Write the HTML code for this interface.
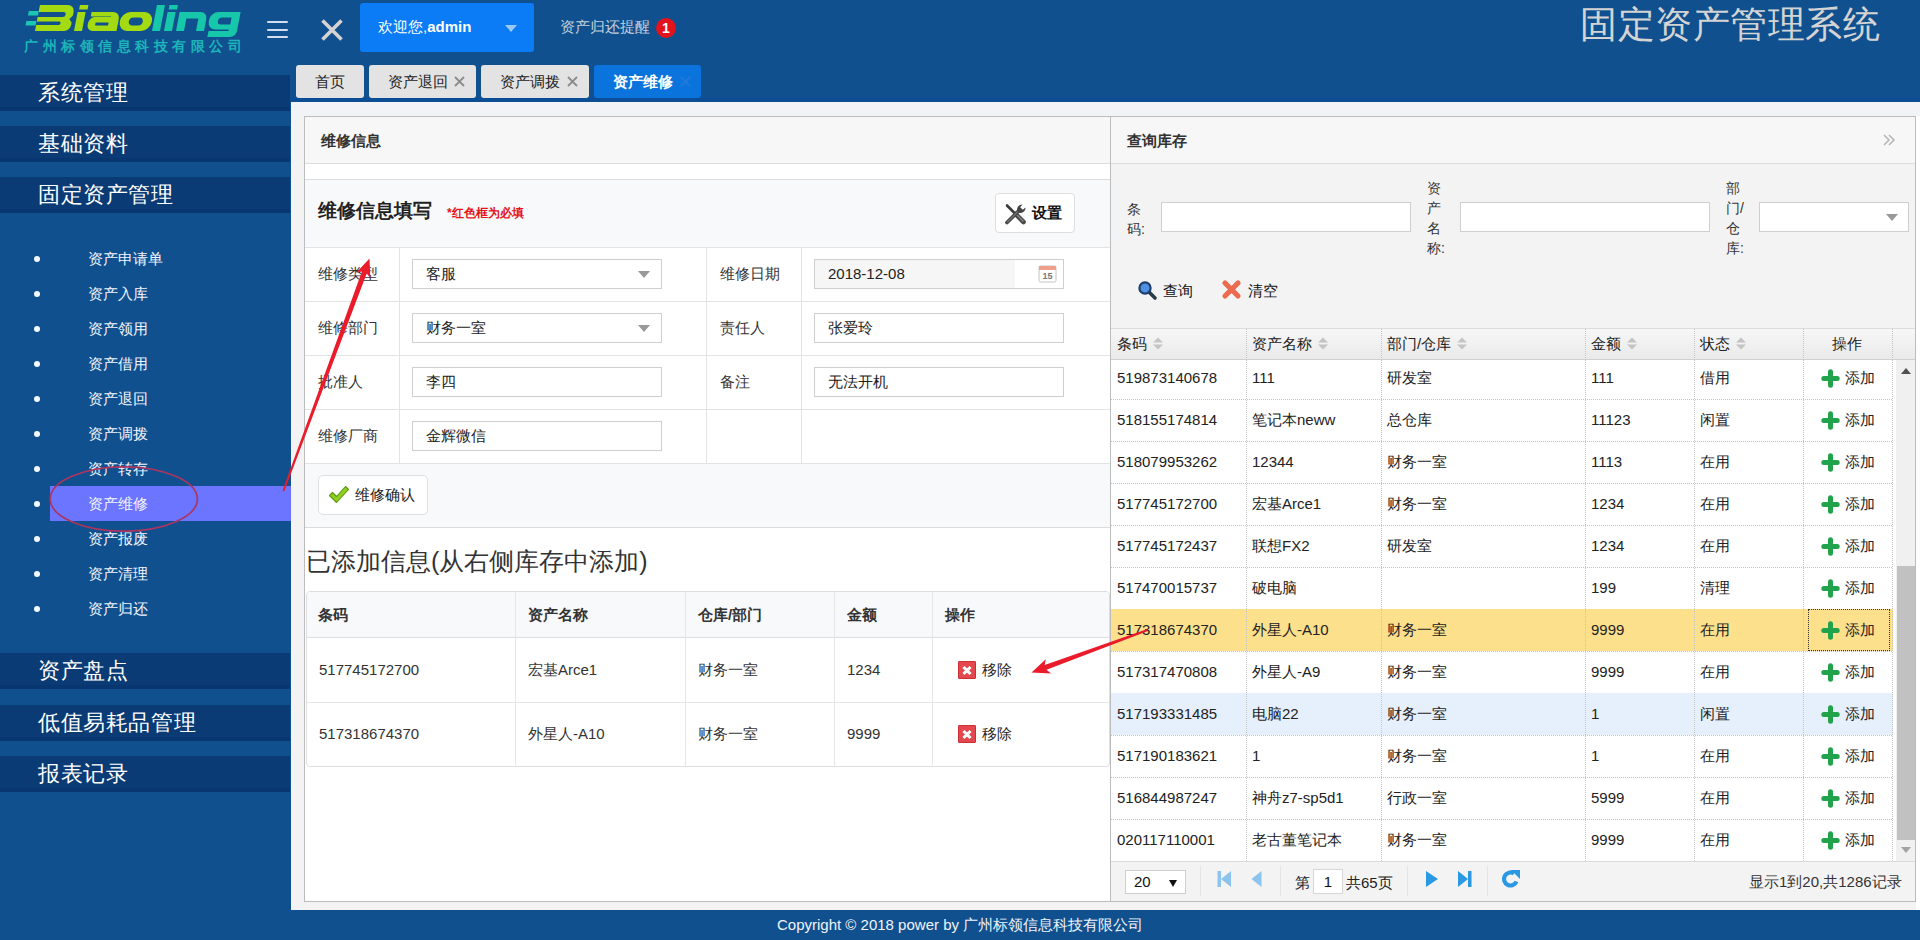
<!DOCTYPE html>
<html><head><meta charset="utf-8">
<style>
*{box-sizing:border-box;margin:0;padding:0}
html,body{width:1920px;height:940px;overflow:hidden}
body{position:relative;background:#11508f;font-family:"Liberation Sans",sans-serif;color:#333;font-size:15px}
.a{position:absolute}
.nw{white-space:nowrap}
/* header */
.logo1{left:26px;top:-4px;font-size:40px;font-weight:bold;font-style:italic;letter-spacing:-1px;line-height:44px}
.hamb{left:267px;width:21px;height:2px;background:#d2def0;border-radius:1px}
.welcome{left:360px;top:3px;width:174px;height:49px;background:#0b7cf6;border-radius:3px}
.tab{top:65px;height:33px;border-radius:3px;background:#e3e3e3;color:#222;font-size:15px;line-height:33px}
.tabx{color:#8a8a8a;font-size:17px}
.tx{position:absolute;top:11px;width:11px;height:11px}
/* sidebar */
.bar{left:0;width:290px;height:36px;background:#0a3b75;box-shadow:inset 0 -4px 0 #083670;color:#fff;font-size:22px;letter-spacing:0.6px;line-height:36px;padding-left:38px}
.sub{left:0;width:291px;height:35px;color:#f2f6ff;font-size:15px;line-height:35px}
.sub .dot{position:absolute;left:34px;top:15px;width:6px;height:6px;border-radius:50%;background:#f4f8ff}
.sub span{position:absolute;left:87.5px;top:0}
/* content */
.content{left:291px;top:102px;width:1629px;height:808px;background:#f3f3f4}
.panel{top:116px;height:786px;border:1px solid #bcbcbc;background:#fff}
.phead{position:absolute;left:0;top:0;right:0;height:47px;background:#f7f7f7;border-bottom:1px solid #dcdcdc;font-weight:bold;font-size:15px;line-height:47px;padding-left:16px;color:#333}
.lbl{font-size:15px;color:#333}
.inp{height:30px;border:1px solid #cfcfcf;background:#fff;font-size:15px;line-height:28px;padding-left:13px;color:#222}
.gl{background:#e3e3e3}
.rm{width:18px;height:18px;background:#e5474f;border:1px solid #c83038;border-radius:1px}
.rm:before,.rm:after{content:"";position:absolute;left:3px;top:7px;width:10px;height:3px;background:#fff;transform:rotate(45deg)}
.rm:after{transform:rotate(-45deg)}
.sl{font-size:14px;line-height:20px;color:#333}
.gh{top:334px;font-size:15px;line-height:20px;color:#222}
.srt{display:inline-block;margin-left:6px;vertical-align:-1px}
.gc{font-size:15px;line-height:20px;color:#222}
.dh{height:1px;background:repeating-linear-gradient(90deg,#c4c4c4 0 1px,transparent 1px 2px)}
.dv{width:1px;background:repeating-linear-gradient(180deg,#c4c4c4 0 1px,transparent 1px 2px)}
.plus{width:18px;height:18px;background:linear-gradient(#22a54a,#22a54a) 6px 0/6px 18px no-repeat,linear-gradient(#22a54a,#22a54a) 0 6px/18px 6px no-repeat;border-radius:2px}
.psep{top:866px;width:1px;height:30px;background:#e4e4e4}
.footer{left:777px;top:910px;height:30px;color:#f0f4fa;font-size:15px;line-height:30px}
</style></head><body>

<!-- HEADER -->
<svg class="a" style="left:0;top:0" width="260" height="40" viewBox="0 0 260 40">
 <g transform="translate(0,31) skewX(-10.8)">
  <path fill="#a3da12" fill-rule="evenodd" d="M35 -26H63A7 7 0 0 1 70 -19V-15.5L67 -12L70 -8.5V-6A6 6 0 0 1 64 0H35V-6H58A2 2 0 0 0 58 -9.5H35V-14H60A2.5 2.5 0 0 0 60 -19H35Z"/>
  <path fill="#1bc5b0" d="M25 -20H35V-15.5H25Z M24.5 -10H34.5V-5.5H24.5Z"/>
  <path fill="#a3da12" d="M74 -19H82V0H74Z M75 -26H83.5V-21.5H75Z"/>
  <path fill="#a3da12" fill-rule="evenodd" d="M88 -19H109A7 7 0 0 1 116.5 -12V0H92A6 6 0 0 1 86.5 -6V-8A6 6 0 0 1 92 -14H108.5V-14.5H88Z M94 -8.5V-5.5H107V-8.5Z"/>
  <path fill="#a3da12" fill-rule="evenodd" d="M127 -19H141A9 9 0 0 1 150 -10V-9A9 9 0 0 1 141 0H127A9 9 0 0 1 118 -9V-10A9 9 0 0 1 127 -19Z M131 -13.5A4 4 0 0 0 127 -9.5A4 4 0 0 0 131 -5.5H137A4 4 0 0 0 141 -9.5A4 4 0 0 0 137 -13.5Z"/>
  <path fill="#16c7aa" d="M152 -26H160V0H152Z M164 -19H172V0H164Z M164.5 -26H173V-21.5H164.5Z"/>
  <path fill="#16c7aa" d="M176 -19H197A7 7 0 0 1 204 -12V0H196V-12.5H184V0H176Z"/>
  <path fill="#16c7aa" fill-rule="evenodd" d="M215 -19H237V0A6 6 0 0 1 231 6H208.5V0H228.5V-1.5H215A8 8 0 0 1 207 -9.5V-11A8 8 0 0 1 215 -19Z M219.5 -13.5A3.5 3.5 0 0 0 216 -10A3.5 3.5 0 0 0 219.5 -6.5H229V-13.5Z"/>
 </g>
</svg>
<div class="a nw" style="left:24px;top:37px;font-size:14px;line-height:18px;letter-spacing:4.5px;color:#1cb4b8;font-weight:bold">广州标领信息科技有限公司</div>
<div class="a hamb" style="top:21px"></div>
<div class="a hamb" style="top:29px"></div>
<div class="a hamb" style="top:36px"></div>
<svg class="a" style="left:319px;top:17px" width="26" height="26" viewBox="0 0 26 26"><path d="M3.5 3.5L22.5 22.5M22.5 3.5L3.5 22.5" stroke="#d6d4d2" stroke-width="3.6"/></svg>
<div class="a welcome"><span class="a nw" style="left:18px;top:14px;color:#fff;font-size:15px;line-height:20px">欢迎您,<b>admin</b></span>
<svg class="a" style="left:145px;top:22px" width="12" height="7"><path d="M0 0H12L6 7Z" fill="#9ccaff"/></svg></div>
<div class="a nw" style="left:560px;top:17px;color:#c5d0de;font-size:15px;line-height:20px">资产归还提醒</div>
<div class="a" style="left:656px;top:18px;width:20px;height:20px;border-radius:50%;background:#e3131b;color:#fff;font-size:14px;font-weight:bold;text-align:center;line-height:20px">1</div>
<div class="a nw" style="left:1580px;top:3px;color:#d4d4d4;font-size:37px;letter-spacing:0.5px;line-height:44px">固定资产管理系统</div>

<div class="a tab" style="left:296px;width:68px;text-align:center">首页</div>
<div class="a tab" style="left:369px;width:107px"><span class="a" style="left:19px">资产退回</span><svg class="tx" style="left:85px" viewBox="0 0 11 11"><path d="M1 1L10 10M10 1L1 10" stroke="#8c8c8c" stroke-width="1.9"/></svg></div>
<div class="a tab" style="left:481px;width:108px"><span class="a" style="left:19px">资产调拨</span><svg class="tx" style="left:86px" viewBox="0 0 11 11"><path d="M1 1L10 10M10 1L1 10" stroke="#8c8c8c" stroke-width="1.9"/></svg></div>
<div class="a tab" style="left:594px;width:107px;background:#0a74dc;color:#fff;font-weight:bold"><span class="a" style="left:19px">资产维修</span><svg class="tx" style="left:86px" viewBox="0 0 11 11"><path d="M1 1L10 10M10 1L1 10" stroke="#2079d8" stroke-width="1.9"/></svg></div>

<div class="a" style="left:291px;top:98px;width:1629px;height:3px;background:#0b4e97"></div>
<!-- SIDEBAR -->
<div class="a bar" style="top:75px">系统管理</div>
<div class="a bar" style="top:126px">基础资料</div>
<div class="a bar" style="top:177px">固定资产管理</div>

<div class="a sub" style="top:241px"><i class="dot"></i><span>资产申请单</span></div>
<div class="a sub" style="top:276px"><i class="dot"></i><span>资产入库</span></div>
<div class="a sub" style="top:311px"><i class="dot"></i><span>资产领用</span></div>
<div class="a sub" style="top:346px"><i class="dot"></i><span>资产借用</span></div>
<div class="a sub" style="top:381px"><i class="dot"></i><span>资产退回</span></div>
<div class="a sub" style="top:416px"><i class="dot"></i><span>资产调拨</span></div>
<div class="a sub" style="top:451px"><i class="dot"></i><span>资产转存</span></div>
<div class="a" style="left:50px;top:486px;width:241px;height:35px;background:#6b75ff"></div>
<div class="a sub" style="top:486px"><i class="dot"></i><span>资产维修</span></div>
<div class="a sub" style="top:521px"><i class="dot"></i><span>资产报废</span></div>
<div class="a sub" style="top:556px"><i class="dot"></i><span>资产清理</span></div>
<div class="a sub" style="top:591px"><i class="dot"></i><span>资产归还</span></div>

<div class="a bar" style="top:653px">资产盘点</div>
<div class="a bar" style="top:705px">低值易耗品管理</div>
<div class="a bar" style="top:756px">报表记录</div>

<!-- CONTENT -->
<div class="a content"></div>
<div class="a" style="left:291px;top:102px;width:1629px;height:14px;background:#f1f3f7"></div>

<div class="a" style="left:1916px;top:116px;width:4px;height:794px;background:#fff"></div>
<!-- LEFT PANEL -->
<div class="a panel" style="left:304px;width:807px">
  <div class="phead">维修信息</div>
</div>

<!-- form box -->
<div class="a" style="left:305px;top:179px;width:805px;height:349px;border-top:1px solid #dcdcdc;border-bottom:1px solid #dcdcdc;background:#f8f9fb"></div>
<div class="a nw" style="left:318px;top:199px;font-size:19px;font-weight:bold;line-height:24px;color:#222">维修信息填写</div>
<div class="a nw" style="left:447px;top:205px;font-size:12px;font-weight:bold;line-height:16px;color:#e3141c">*红色框为必填</div>
<div class="a" style="left:995px;top:193px;width:80px;height:40px;border:1px solid #dedede;border-radius:4px;background:#fff"></div>
<svg class="a" style="left:1004px;top:203px" width="23" height="22" viewBox="0 0 23 22">
 <path d="M3 2.5L11 10.5" stroke="#3a3a3a" stroke-width="2.6" stroke-linecap="round"/>
 <path d="M11.5 11L19.5 19" stroke="#4a4a4a" stroke-width="4.6" stroke-linecap="round"/>
 <path d="M12 11L19 18" stroke="#8a8a8a" stroke-width="1.2" stroke-linecap="round"/>
 <path d="M3 19.5L15 7.5" stroke="#4a4a4a" stroke-width="3.8" stroke-linecap="round"/>
 <path d="M3.5 19L14.5 8" stroke="#8a8a8a" stroke-width="1" stroke-linecap="round"/>
 <path d="M13.5 8.5A5 5 0 0 1 18.5 1.5L16.2 4.2L18.8 6.8L21.5 4.5A5 5 0 0 1 14.5 9.5Z" fill="#444"/>
</svg>
<div class="a nw" style="left:1032px;top:203px;font-size:15px;font-weight:bold;line-height:20px;color:#111">设置</div>

<div class="a" style="left:305px;top:247px;width:805px;height:216px;background:#fff"></div>
<div class="a gl" style="left:305px;top:247px;width:805px;height:1px"></div>
<div class="a gl" style="left:305px;top:301px;width:805px;height:1px"></div>
<div class="a gl" style="left:305px;top:355px;width:805px;height:1px"></div>
<div class="a gl" style="left:305px;top:409px;width:805px;height:1px"></div>
<div class="a gl" style="left:305px;top:463px;width:805px;height:1px"></div>
<div class="a gl" style="left:399px;top:247px;width:1px;height:216px"></div>
<div class="a gl" style="left:706px;top:247px;width:1px;height:216px"></div>
<div class="a gl" style="left:801px;top:247px;width:1px;height:216px"></div>

<div class="a lbl nw" style="left:318px;top:264px;line-height:20px">维修类型</div>
<div class="a lbl nw" style="left:318px;top:318px;line-height:20px">维修部门</div>
<div class="a lbl nw" style="left:318px;top:372px;line-height:20px">批准人</div>
<div class="a lbl nw" style="left:318px;top:426px;line-height:20px">维修厂商</div>
<div class="a lbl nw" style="left:720px;top:264px;line-height:20px">维修日期</div>
<div class="a lbl nw" style="left:720px;top:318px;line-height:20px">责任人</div>
<div class="a lbl nw" style="left:720px;top:372px;line-height:20px">备注</div>

<div class="a inp nw" style="left:412px;top:259px;width:250px">客服</div>
<svg class="a" style="left:638px;top:271px" width="12" height="7"><path d="M0 0H12L6 7Z" fill="#999"/></svg>
<div class="a inp nw" style="left:412px;top:313px;width:250px">财务一室</div>
<svg class="a" style="left:638px;top:325px" width="12" height="7"><path d="M0 0H12L6 7Z" fill="#999"/></svg>
<div class="a inp nw" style="left:412px;top:367px;width:250px">李四</div>
<div class="a inp nw" style="left:412px;top:421px;width:250px">金辉微信</div>
<div class="a inp nw" style="left:814px;top:259px;width:250px;background:linear-gradient(90deg,#f6f6f6 0,#f6f6f6 200px,#fff 200px)">2018-12-08</div>
<svg class="a" style="left:1038px;top:264px" width="19" height="19" viewBox="0 0 19 19">
 <rect x="1" y="2" width="17" height="16" rx="1.5" fill="#fff" stroke="#c4c4c4"/>
 <rect x="1" y="2" width="17" height="4" fill="#f0a08a"/>
 <text x="9.5" y="15" font-size="9" font-family="Liberation Sans" text-anchor="middle" fill="#777" font-weight="bold">15</text>
</svg>
<div class="a inp nw" style="left:814px;top:313px;width:250px">张爱玲</div>
<div class="a inp nw" style="left:814px;top:367px;width:250px">无法开机</div>

<div class="a" style="left:318px;top:475px;width:110px;height:40px;border:1px solid #e0e0e0;border-radius:5px;background:#fff"></div>
<svg class="a" style="left:328px;top:485px" width="22" height="19" viewBox="0 0 22 19">
 <path d="M1.5 10.5L4.5 7.5L8.5 11.5L17.5 1.5L20.5 4.5L8.5 17.5Z" fill="#8fd01c" stroke="#5f9410" stroke-width="1.1" stroke-linejoin="round"/>
</svg>
<div class="a lbl nw" style="left:355px;top:485px;line-height:20px;color:#222">维修确认</div>

<div class="a nw" style="left:306px;top:546px;font-size:25px;line-height:30px;color:#333">已添加信息(从右侧库存中添加)</div>

<!-- added table -->
<div class="a" style="left:306px;top:591px;width:804px;height:176px;border:1px solid #dedede;border-radius:4px;background:#fff;overflow:hidden">
 <div class="a" style="left:0;top:0;width:802px;height:46px;background:#f8f9fb;border-bottom:1px solid #dedede"></div>
 <div class="a gl" style="left:0;top:110px;width:802px;height:1px;background:#e6e6e6"></div>
 <div class="a gl" style="left:208px;top:0;width:1px;height:176px;background:#e6e6e6"></div>
 <div class="a gl" style="left:378px;top:0;width:1px;height:176px;background:#e6e6e6"></div>
 <div class="a gl" style="left:527px;top:0;width:1px;height:176px;background:#e6e6e6"></div>
 <div class="a gl" style="left:625px;top:0;width:1px;height:176px;background:#e6e6e6"></div>
</div>
<div class="a nw" style="left:318px;top:605px;font-weight:bold;line-height:20px">条码</div>
<div class="a nw" style="left:528px;top:605px;font-weight:bold;line-height:20px">资产名称</div>
<div class="a nw" style="left:698px;top:605px;font-weight:bold;line-height:20px">仓库/部门</div>
<div class="a nw" style="left:847px;top:605px;font-weight:bold;line-height:20px">金额</div>
<div class="a nw" style="left:945px;top:605px;font-weight:bold;line-height:20px">操作</div>

<div class="a nw" style="left:319px;top:660px;line-height:20px">517745172700</div>
<div class="a nw" style="left:528px;top:660px;line-height:20px">宏基Arce1</div>
<div class="a nw" style="left:698px;top:660px;line-height:20px">财务一室</div>
<div class="a nw" style="left:847px;top:660px;line-height:20px">1234</div>
<div class="a rm" style="left:958px;top:661px"></div>
<div class="a nw" style="left:982px;top:660px;line-height:20px;color:#222">移除</div>

<div class="a nw" style="left:319px;top:724px;line-height:20px">517318674370</div>
<div class="a nw" style="left:528px;top:724px;line-height:20px">外星人-A10</div>
<div class="a nw" style="left:698px;top:724px;line-height:20px">财务一室</div>
<div class="a nw" style="left:847px;top:724px;line-height:20px">9999</div>
<div class="a rm" style="left:958px;top:725px"></div>
<div class="a nw" style="left:982px;top:724px;line-height:20px;color:#222">移除</div>

<!-- RIGHT PANEL -->
<div class="a panel" style="left:1110px;width:806px">
  <div class="phead">查询库存</div>
</div>

<!-- search area -->
<div class="a" style="left:1111px;top:164px;width:804px;height:164px;background:#f3f3f3"></div>
<div class="a sl" style="left:1127px;top:199px">条<br>码:</div>
<div class="a inp" style="left:1161px;top:202px;width:250px"></div>
<div class="a sl" style="left:1427px;top:178px">资<br>产<br>名<br>称:</div>
<div class="a inp" style="left:1460px;top:202px;width:250px"></div>
<div class="a sl" style="left:1726px;top:178px">部<br>门/<br>仓<br>库:</div>
<div class="a inp" style="left:1759px;top:202px;width:150px"></div>
<svg class="a" style="left:1886px;top:214px" width="12" height="7"><path d="M0 0H12L6 7Z" fill="#999"/></svg>

<svg class="a" style="left:1137px;top:280px" width="21" height="21" viewBox="0 0 21 21">
 <path d="M11 11L18 18" stroke="#2b3a48" stroke-width="3.6" stroke-linecap="round"/>
 <circle cx="8" cy="8" r="5.6" fill="#4f90e0" stroke="#1d3e6a" stroke-width="2.2"/>
</svg>
<div class="a nw" style="left:1163px;top:281px;font-size:15px;line-height:20px;color:#111">查询</div>
<svg class="a" style="left:1221px;top:279px" width="21" height="21" viewBox="0 0 21 21">
 <path d="M4 4L17 17M17 4L4 17" stroke="#ec6a50" stroke-width="5.2" stroke-linecap="round"/>
</svg>
<div class="a nw" style="left:1248px;top:281px;font-size:15px;line-height:20px;color:#111">清空</div>

<!-- grid header -->
<div class="a" style="left:1111px;top:328px;width:804px;height:32px;background:linear-gradient(#f7f7f7,#eaeaea);border-top:1px solid #dcdcdc;border-bottom:1px solid #d0d0d0"></div>
<div class="a dv" style="left:1246px;top:329px;height:30px"></div>
<div class="a dv" style="left:1381px;top:329px;height:30px"></div>
<div class="a dv" style="left:1585px;top:329px;height:30px"></div>
<div class="a dv" style="left:1694px;top:329px;height:30px"></div>
<div class="a dv" style="left:1803px;top:329px;height:30px"></div>
<div class="a dv" style="left:1892px;top:329px;height:30px"></div>
<div class="a nw gh" style="left:1117px">条码<svg class="srt" width="10" height="13"><path d="M0 5.5L5 0.5L10 5.5Z M0 7.5L5 12.5L10 7.5Z" fill="#c4c4c4"/></svg></div>
<div class="a nw gh" style="left:1252px">资产名称<svg class="srt" width="10" height="13"><path d="M0 5.5L5 0.5L10 5.5Z M0 7.5L5 12.5L10 7.5Z" fill="#c4c4c4"/></svg></div>
<div class="a nw gh" style="left:1387px">部门/仓库<svg class="srt" width="10" height="13"><path d="M0 5.5L5 0.5L10 5.5Z M0 7.5L5 12.5L10 7.5Z" fill="#c4c4c4"/></svg></div>
<div class="a nw gh" style="left:1591px">金额<svg class="srt" width="10" height="13"><path d="M0 5.5L5 0.5L10 5.5Z M0 7.5L5 12.5L10 7.5Z" fill="#c4c4c4"/></svg></div>
<div class="a nw gh" style="left:1700px">状态<svg class="srt" width="10" height="13"><path d="M0 5.5L5 0.5L10 5.5Z M0 7.5L5 12.5L10 7.5Z" fill="#c4c4c4"/></svg></div>
<div class="a nw gh" style="left:1832px">操作</div>

<div class="a" style="left:1111px;top:360px;width:782px;height:502px;overflow:hidden;background:#fff">
 <div class="a dh" style="left:0;top:39px;width:782px"></div>
 <div class="a dh" style="left:0;top:81px;width:782px"></div>
 <div class="a dh" style="left:0;top:123px;width:782px"></div>
 <div class="a dh" style="left:0;top:165px;width:782px"></div>
 <div class="a dh" style="left:0;top:207px;width:782px"></div>
 <div class="a dh" style="left:0;top:249px;width:782px"></div>
 <div class="a" style="left:0;top:249px;width:782px;height:42px;background:#fde08c"></div>
 <div class="a dh" style="left:0;top:291px;width:782px"></div>
 <div class="a dh" style="left:0;top:333px;width:782px"></div>
 <div class="a" style="left:0;top:333px;width:782px;height:42px;background:#e6effc"></div>
 <div class="a dh" style="left:0;top:375px;width:782px"></div>
 <div class="a dh" style="left:0;top:417px;width:782px"></div>
 <div class="a dh" style="left:0;top:459px;width:782px"></div>
 <div class="a dh" style="left:0;top:501px;width:782px"></div>
 <div class="a dv" style="left:135px;top:0;height:502px"></div>
 <div class="a dv" style="left:270px;top:0;height:502px"></div>
 <div class="a dv" style="left:474px;top:0;height:502px"></div>
 <div class="a dv" style="left:583px;top:0;height:502px"></div>
 <div class="a dv" style="left:692px;top:0;height:502px"></div>
 <div class="a dv" style="left:781px;top:0;height:502px"></div>
 <div class="a" style="left:697px;top:249px;width:82px;height:42px;border:1px dotted #333"></div>
 <div class="a nw gc" style="left:6px;top:8px">519873140678</div>
 <div class="a nw gc" style="left:141px;top:8px">111</div>
 <div class="a nw gc" style="left:276px;top:8px">研发室</div>
 <div class="a nw gc" style="left:480px;top:8px">111</div>
 <div class="a nw gc" style="left:589px;top:8px">借用</div>
 <svg class="a" style="left:710px;top:9px" width="19" height="19"><path d="M9.5 2.8V16.2M2.8 9.5H16.2" stroke="#21a34b" stroke-width="5" stroke-linecap="round"/></svg>
 <div class="a nw gc" style="left:734px;top:8px">添加</div>
 <div class="a nw gc" style="left:6px;top:50px">518155174814</div>
 <div class="a nw gc" style="left:141px;top:50px">笔记本neww</div>
 <div class="a nw gc" style="left:276px;top:50px">总仓库</div>
 <div class="a nw gc" style="left:480px;top:50px">11123</div>
 <div class="a nw gc" style="left:589px;top:50px">闲置</div>
 <svg class="a" style="left:710px;top:51px" width="19" height="19"><path d="M9.5 2.8V16.2M2.8 9.5H16.2" stroke="#21a34b" stroke-width="5" stroke-linecap="round"/></svg>
 <div class="a nw gc" style="left:734px;top:50px">添加</div>
 <div class="a nw gc" style="left:6px;top:92px">518079953262</div>
 <div class="a nw gc" style="left:141px;top:92px">12344</div>
 <div class="a nw gc" style="left:276px;top:92px">财务一室</div>
 <div class="a nw gc" style="left:480px;top:92px">1113</div>
 <div class="a nw gc" style="left:589px;top:92px">在用</div>
 <svg class="a" style="left:710px;top:93px" width="19" height="19"><path d="M9.5 2.8V16.2M2.8 9.5H16.2" stroke="#21a34b" stroke-width="5" stroke-linecap="round"/></svg>
 <div class="a nw gc" style="left:734px;top:92px">添加</div>
 <div class="a nw gc" style="left:6px;top:134px">517745172700</div>
 <div class="a nw gc" style="left:141px;top:134px">宏基Arce1</div>
 <div class="a nw gc" style="left:276px;top:134px">财务一室</div>
 <div class="a nw gc" style="left:480px;top:134px">1234</div>
 <div class="a nw gc" style="left:589px;top:134px">在用</div>
 <svg class="a" style="left:710px;top:135px" width="19" height="19"><path d="M9.5 2.8V16.2M2.8 9.5H16.2" stroke="#21a34b" stroke-width="5" stroke-linecap="round"/></svg>
 <div class="a nw gc" style="left:734px;top:134px">添加</div>
 <div class="a nw gc" style="left:6px;top:176px">517745172437</div>
 <div class="a nw gc" style="left:141px;top:176px">联想FX2</div>
 <div class="a nw gc" style="left:276px;top:176px">研发室</div>
 <div class="a nw gc" style="left:480px;top:176px">1234</div>
 <div class="a nw gc" style="left:589px;top:176px">在用</div>
 <svg class="a" style="left:710px;top:177px" width="19" height="19"><path d="M9.5 2.8V16.2M2.8 9.5H16.2" stroke="#21a34b" stroke-width="5" stroke-linecap="round"/></svg>
 <div class="a nw gc" style="left:734px;top:176px">添加</div>
 <div class="a nw gc" style="left:6px;top:218px">517470015737</div>
 <div class="a nw gc" style="left:141px;top:218px">破电脑</div>
 <div class="a nw gc" style="left:480px;top:218px">199</div>
 <div class="a nw gc" style="left:589px;top:218px">清理</div>
 <svg class="a" style="left:710px;top:219px" width="19" height="19"><path d="M9.5 2.8V16.2M2.8 9.5H16.2" stroke="#21a34b" stroke-width="5" stroke-linecap="round"/></svg>
 <div class="a nw gc" style="left:734px;top:218px">添加</div>
 <div class="a nw gc" style="left:6px;top:260px">517318674370</div>
 <div class="a nw gc" style="left:141px;top:260px">外星人-A10</div>
 <div class="a nw gc" style="left:276px;top:260px">财务一室</div>
 <div class="a nw gc" style="left:480px;top:260px">9999</div>
 <div class="a nw gc" style="left:589px;top:260px">在用</div>
 <svg class="a" style="left:710px;top:261px" width="19" height="19"><path d="M9.5 2.8V16.2M2.8 9.5H16.2" stroke="#21a34b" stroke-width="5" stroke-linecap="round"/></svg>
 <div class="a nw gc" style="left:734px;top:260px">添加</div>
 <div class="a nw gc" style="left:6px;top:302px">517317470808</div>
 <div class="a nw gc" style="left:141px;top:302px">外星人-A9</div>
 <div class="a nw gc" style="left:276px;top:302px">财务一室</div>
 <div class="a nw gc" style="left:480px;top:302px">9999</div>
 <div class="a nw gc" style="left:589px;top:302px">在用</div>
 <svg class="a" style="left:710px;top:303px" width="19" height="19"><path d="M9.5 2.8V16.2M2.8 9.5H16.2" stroke="#21a34b" stroke-width="5" stroke-linecap="round"/></svg>
 <div class="a nw gc" style="left:734px;top:302px">添加</div>
 <div class="a nw gc" style="left:6px;top:344px">517193331485</div>
 <div class="a nw gc" style="left:141px;top:344px">电脑22</div>
 <div class="a nw gc" style="left:276px;top:344px">财务一室</div>
 <div class="a nw gc" style="left:480px;top:344px">1</div>
 <div class="a nw gc" style="left:589px;top:344px">闲置</div>
 <svg class="a" style="left:710px;top:345px" width="19" height="19"><path d="M9.5 2.8V16.2M2.8 9.5H16.2" stroke="#21a34b" stroke-width="5" stroke-linecap="round"/></svg>
 <div class="a nw gc" style="left:734px;top:344px">添加</div>
 <div class="a nw gc" style="left:6px;top:386px">517190183621</div>
 <div class="a nw gc" style="left:141px;top:386px">1</div>
 <div class="a nw gc" style="left:276px;top:386px">财务一室</div>
 <div class="a nw gc" style="left:480px;top:386px">1</div>
 <div class="a nw gc" style="left:589px;top:386px">在用</div>
 <svg class="a" style="left:710px;top:387px" width="19" height="19"><path d="M9.5 2.8V16.2M2.8 9.5H16.2" stroke="#21a34b" stroke-width="5" stroke-linecap="round"/></svg>
 <div class="a nw gc" style="left:734px;top:386px">添加</div>
 <div class="a nw gc" style="left:6px;top:428px">516844987247</div>
 <div class="a nw gc" style="left:141px;top:428px">神舟z7-sp5d1</div>
 <div class="a nw gc" style="left:276px;top:428px">行政一室</div>
 <div class="a nw gc" style="left:480px;top:428px">5999</div>
 <div class="a nw gc" style="left:589px;top:428px">在用</div>
 <svg class="a" style="left:710px;top:429px" width="19" height="19"><path d="M9.5 2.8V16.2M2.8 9.5H16.2" stroke="#21a34b" stroke-width="5" stroke-linecap="round"/></svg>
 <div class="a nw gc" style="left:734px;top:428px">添加</div>
 <div class="a nw gc" style="left:6px;top:470px">020117110001</div>
 <div class="a nw gc" style="left:141px;top:470px">老古董笔记本</div>
 <div class="a nw gc" style="left:276px;top:470px">财务一室</div>
 <div class="a nw gc" style="left:480px;top:470px">9999</div>
 <div class="a nw gc" style="left:589px;top:470px">在用</div>
 <svg class="a" style="left:710px;top:471px" width="19" height="19"><path d="M9.5 2.8V16.2M2.8 9.5H16.2" stroke="#21a34b" stroke-width="5" stroke-linecap="round"/></svg>
 <div class="a nw gc" style="left:734px;top:470px">添加</div>
</div>

<!-- scrollbar -->
<div class="a" style="left:1893px;top:360px;width:22px;height:502px;background:#fff"></div>
<div class="a" style="left:1896px;top:360px;width:19px;height:502px;background:#f0f0f0"></div>
<div class="a" style="left:1897px;top:566px;width:18px;height:274px;background:#c1c1c1"></div>
<svg class="a" style="left:1901px;top:368px" width="10" height="6"><path d="M0 6H10L5 0Z" fill="#505050"/></svg>
<svg class="a" style="left:1901px;top:847px" width="10" height="6"><path d="M0 0H10L5 6Z" fill="#a3a3a3"/></svg>

<!-- pager -->
<div class="a" style="left:1111px;top:861px;width:804px;height:40px;background:#f3f3f3;border-top:1px solid #dadada"></div>
<div class="a" style="left:1125px;top:870px;width:61px;height:24px;border:1px solid #cfcfcf;background:#fff"></div>
<div class="a nw" style="left:1134px;top:872px;font-size:15px;line-height:20px;color:#111">20</div>
<svg class="a" style="left:1169px;top:880px" width="8" height="7"><path d="M0 0H8L4 7Z" fill="#111"/></svg>
<div class="a psep" style="left:1200px"></div>
<svg class="a" style="left:1217px;top:870px" width="15" height="18" viewBox="0 0 15 18"><rect x="0.5" y="1" width="3.5" height="16" fill="#8cc4ee"/><path d="M14 1V17L4 9Z" fill="#8cc4ee"/></svg>
<svg class="a" style="left:1251px;top:870px" width="11" height="18" viewBox="0 0 11 18"><path d="M10.5 1V17L0.5 9Z" fill="#8cc4ee"/></svg>
<div class="a psep" style="left:1280px"></div>
<div class="a nw" style="left:1295px;top:873px;font-size:15px;line-height:20px;color:#222">第</div>
<div class="a" style="left:1313px;top:869px;width:30px;height:25px;border:1px solid #d6d6d6;background:#fff;text-align:center;font-size:15px;line-height:23px;color:#111">1</div>
<div class="a nw" style="left:1346px;top:873px;font-size:15px;line-height:20px;color:#222">共65页</div>
<div class="a psep" style="left:1407px"></div>
<svg class="a" style="left:1425px;top:870px" width="14" height="18" viewBox="0 0 14 18"><path d="M1 1V17L13 9Z" fill="#2a98e2"/></svg>
<svg class="a" style="left:1457px;top:870px" width="15" height="18" viewBox="0 0 15 18"><path d="M1 1V17L11 9Z" fill="#2a98e2"/><rect x="11" y="1" width="3.5" height="16" fill="#2a98e2"/></svg>
<div class="a psep" style="left:1487px"></div>
<svg class="a" style="left:1501px;top:869px" width="20" height="20" viewBox="0 0 20 20">
 <path d="M15.5 12.5A6.5 6.5 0 1 1 13 4.5" fill="none" stroke="#2a98e2" stroke-width="4.2"/>
 <path d="M10 1H19V10Z" fill="#2a98e2"/>
</svg>
<div class="a nw" style="left:1749px;top:872px;font-size:15px;line-height:20px;color:#333">显示1到20,共1286记录</div>

<svg class="a" style="left:1882px;top:133px" width="14" height="14" viewBox="0 0 14 14"><path d="M2 2L7 7L2 12M7 2L12 7L7 12" fill="none" stroke="#b5b5b5" stroke-width="1.5"/></svg>

<div class="a footer nw">Copyright © 2018 power by 广州标领信息科技有限公司</div>

<svg class="a" style="left:0;top:0" width="1920" height="940" viewBox="0 0 1920 940">
 <ellipse cx="123.8" cy="499" rx="73.6" ry="32.2" fill="none" stroke="#aa3560" stroke-width="1.7"/>
 <polygon points="284.3,491.3 366.7,273.4 370.3,277.9 369.5,258.4 356.2,272.7 361.9,271.6 282.5,490.7" fill="#ea1b2b"/>
 <polygon points="1147.4,629.1 1044.7,664.9 1045.8,659.3 1031.5,672.5 1051.0,673.4 1046.5,669.8 1148.0,630.9" fill="#ea1b2b"/>
</svg>
</body></html>
